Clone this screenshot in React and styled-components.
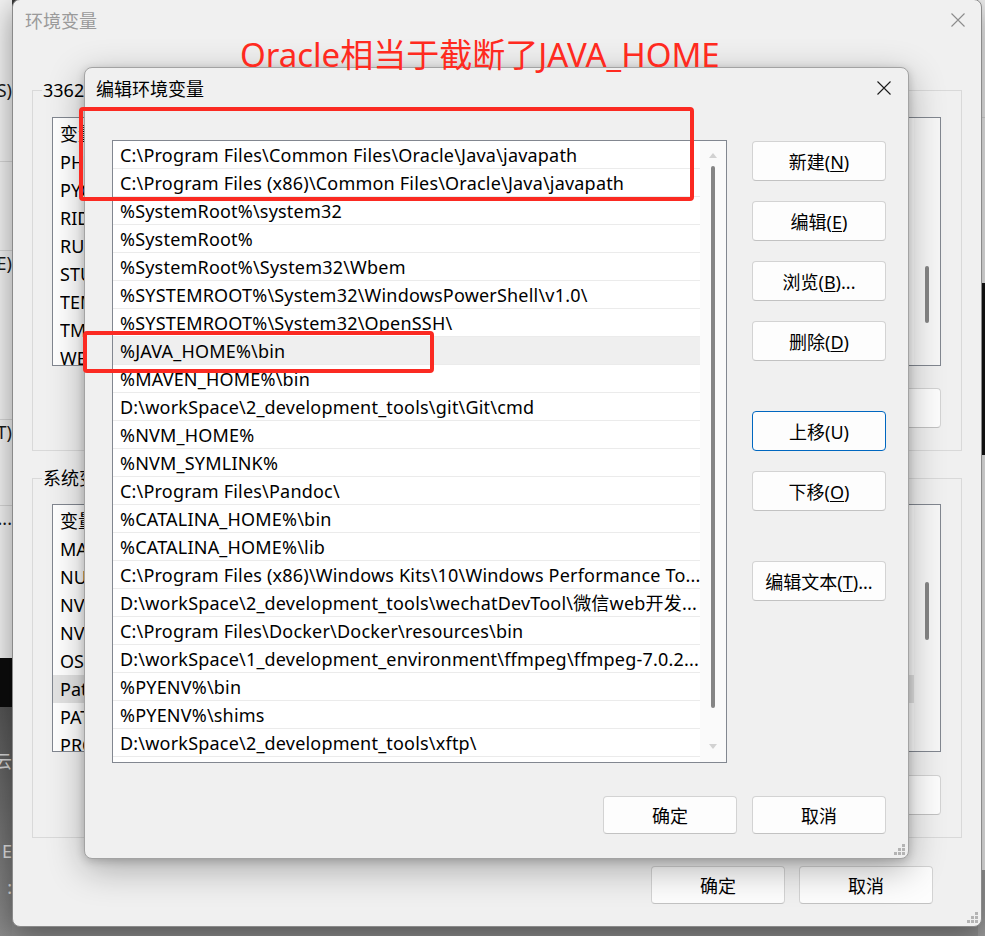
import React from 'react';
import styled, { createGlobalStyle } from 'styled-components';

const GlobalStyle = createGlobalStyle`
  html, body { margin: 0; padding: 0; }
  body {
    font-family: "Noto Sans", "Noto Sans CJK SC", sans-serif;
    color: #000;
  }
  * { box-sizing: border-box; }
`;

const UI_FONT = `"Noto Sans", "Noto Sans CJK SC", sans-serif`;

const Desktop = styled.div`
  position: relative;
  width: 985px;
  height: 936px;
  overflow: hidden;
  background: linear-gradient(#3a3a3a, #4c4c4c 75%, #8c8c8c 95%);
  font-family: ${UI_FONT};
`;

/* windows peeking out at the screen edges */
const BackWindow = styled.div`
  position: absolute;
  top: ${({ $top }) => $top || 0}px;
  left: ${({ $left }) => $left}px;
  width: 260px;
  height: ${({ $h }) => $h}px;
  background: ${({ $bg }) => $bg};
  border-right: ${({ $edge }) => ($edge ? '2px solid #3c3c3c' : 'none')};
  display: flex;
  flex-direction: column;
  font-size: 18px;
  color: #1a1a1a;
  text-align: right;
  overflow: hidden;
`;

const BackRow = styled.div`
  height: ${({ $h }) => $h}px;
  flex-shrink: 0;
  line-height: ${({ $h }) => $h}px;
  background: ${({ $bg }) => $bg || 'transparent'};
  color: ${({ $color }) => $color || 'inherit'};
  border-bottom: ${({ $line }) => ($line ? '1px solid #d6d6d6' : 'none')};
  white-space: nowrap;
`;

/* ---------- outer dialog: 环境变量 ---------- */
const OuterDialog = styled.div`
  position: absolute;
  left: 12px;
  top: -1px;
  width: 970px;
  height: 928px;
  background: #f0f0f0;
  border: 1px solid #8a8a8a;
  border-radius: 8px;
  box-shadow: 0 8px 30px rgba(0, 0, 0, 0.4);
  display: flex;
  flex-direction: column;
`;

const TitleBar = styled.div`
  height: ${({ $h }) => $h}px;
  flex-shrink: 0;
  display: flex;
  align-items: center;
  justify-content: space-between;
  padding: 0 ${({ $pr }) => $pr}px ${({ $pb }) => $pb || 0}px ${({ $pl }) => $pl}px;
  font-size: 18px;
  color: ${({ $inactive }) => ($inactive ? '#9a9a9a' : '#000')};
`;

const OuterBody = styled.div`
  padding: 49px 19px 0 19px;
  display: flex;
  flex-direction: column;
`;

const Group = styled.div`
  border: 1px solid #d9d9d9;
  padding: 0 20px 22px 19px;
  margin-top: ${({ $mt }) => $mt || 0}px;
  display: flex;
  flex-direction: column;
`;

const GroupLabel = styled.div`
  margin: -12px 0 0 -10px;
  align-self: flex-start;
  height: 22px;
  line-height: 22px;
  padding: 0 1px;
  background: #f0f0f0;
  font-size: 18px;
  white-space: nowrap;
`;

const VarList = styled.div`
  margin-top: ${({ $mt }) => $mt}px;
  height: ${({ $h }) => $h}px;
  border: 1px solid #828790;
  background: #fff;
  display: flex;
  overflow: hidden;
`;

const VarRows = styled.div`
  flex: 1;
  display: flex;
  flex-direction: column;
  min-width: 0;
`;

const VarRow = styled.div`
  height: ${({ $header }) => ($header ? 30 : 28)}px;
  flex-shrink: 0;
  display: flex;
  align-items: center;
  padding-left: 7px;
  background: ${({ $selected }) => ($selected ? '#e3e3e3' : 'transparent')};
  font-size: 18px;
  white-space: nowrap;
`;

const VarName = styled.span`
  width: 268px;
  flex-shrink: 0;
  overflow: hidden;
`;

const ScrollTrack = styled.div`
  width: ${({ $w }) => $w}px;
  flex-shrink: 0;
  background: ${({ $bg }) => $bg || '#fafafa'};
  display: flex;
  flex-direction: column;
  align-items: center;
`;

const Thumb = styled.div`
  width: 4px;
  border-radius: 2px;
  background: #858585;
  margin-top: ${({ $top }) => $top}px;
  height: ${({ $h }) => $h}px;
  flex-shrink: 0;
`;

const Arrow = styled.div`
  width: 0;
  height: 0;
  border-left: 4px solid transparent;
  border-right: 4px solid transparent;
  ${({ $down }) =>
    $down ? 'border-top: 5px solid #d2d2d2;' : 'border-bottom: 5px solid #d2d2d2;'}
  margin-top: ${({ $mt }) => $mt}px;
  flex-shrink: 0;
`;

const ButtonRow = styled.div`
  display: flex;
  justify-content: flex-end;
  gap: ${({ $gap }) => $gap}px;
  margin-top: ${({ $mt }) => $mt}px;
  padding-right: ${({ $pr }) => $pr || 0}px;
`;

const Button = styled.button`
  width: 134px;
  height: ${({ $h }) => $h || 40}px;
  flex-shrink: 0;
  margin-top: ${({ $mt }) => $mt || 0}px;
  padding: 0;
  background: #fdfdfd;
  border: 1px solid ${({ $focused }) => ($focused ? '#0067c0' : '#d3d3d3')};
  border-bottom-color: ${({ $focused }) => ($focused ? '#0067c0' : '#c2c2c2')};
  border-radius: 4px;
  font-family: ${UI_FONT};
  font-size: 18px;
  color: #000;
  white-space: nowrap;

  u {
    text-underline-offset: 2px;
  }
`;

/* ---------- front dialog: 编辑环境变量 ---------- */
const EditDialog = styled.div`
  position: absolute;
  left: 84px;
  top: 67px;
  width: 825px;
  height: 792px;
  background: #f0f0f0;
  border: 1px solid #a3a3a3;
  border-radius: 8px;
  box-shadow: 0 10px 36px rgba(0, 0, 0, 0.3), 0 2px 8px rgba(0, 0, 0, 0.18);
  display: flex;
  flex-direction: column;
`;

const EditBody = styled.div`
  padding: 30px 22px 0 27px;
  display: flex;
  flex-direction: column;
`;

const EditMain = styled.div`
  display: flex;
  gap: 25px;
  height: 623px;
`;

const PathList = styled.div`
  width: 615px;
  height: 623px;
  border: 1px solid #828790;
  background: #fff;
  display: flex;
  overflow: hidden;
`;

const PathRows = styled.div`
  flex: 1;
  min-width: 0;
  display: flex;
  flex-direction: column;
`;

const PathRow = styled.div`
  height: 28px;
  flex-shrink: 0;
  padding: 2px 0 0 7px;
  line-height: 25px;
  border-bottom: 1px solid #ebebeb;
  background: ${({ $selected }) => ($selected ? '#efefef' : 'transparent')};
  font-size: 18px;
  letter-spacing: 0.2px;
  white-space: nowrap;
  overflow: hidden;
`;

const ButtonColumn = styled.div`
  width: 134px;
  padding-top: 1px;
  display: flex;
  flex-direction: column;
`;

const Note = styled.div`
  position: absolute;
  left: 240px;
  top: 35px;
  font-size: 33px;
  line-height: 40px;
  color: #ff2a20;
  white-space: nowrap;
`;

const Mark = styled.div`
  position: absolute;
  border: 4px solid #fb2a22;
  border-radius: 4px;
`;

const Grip = styled.svg`
  position: absolute;
  right: 3px;
  bottom: 3px;
`;

const CloseIcon = ({ color }) => (
  <svg width="14" height="14" viewBox="0 0 14 14">
    <path d="M0.5 0.5 L13.5 13.5 M13.5 0.5 L0.5 13.5" stroke={color} strokeWidth="1.1" fill="none" />
  </svg>
);

const ResizeGrip = () => (
  <Grip width="11" height="11" viewBox="0 0 11 11">
    {[[8, 0], [4, 4], [8, 4], [0, 8], [4, 8], [8, 8]].map(([x, y]) => (
      <rect key={`${x}-${y}`} x={x} y={y} width="3" height="3" fill="#b4b4b4" />
    ))}
  </Grip>
);

const paths = [
  'C:\\Program Files\\Common Files\\Oracle\\Java\\javapath',
  'C:\\Program Files (x86)\\Common Files\\Oracle\\Java\\javapath',
  '%SystemRoot%\\system32',
  '%SystemRoot%',
  '%SystemRoot%\\System32\\Wbem',
  '%SYSTEMROOT%\\System32\\WindowsPowerShell\\v1.0\\',
  '%SYSTEMROOT%\\System32\\OpenSSH\\',
  '%JAVA_HOME%\\bin',
  '%MAVEN_HOME%\\bin',
  'D:\\workSpace\\2_development_tools\\git\\Git\\cmd',
  '%NVM_HOME%',
  '%NVM_SYMLINK%',
  'C:\\Program Files\\Pandoc\\',
  '%CATALINA_HOME%\\bin',
  '%CATALINA_HOME%\\lib',
  'C:\\Program Files (x86)\\Windows Kits\\10\\Windows Performance To...',
  'D:\\workSpace\\2_development_tools\\wechatDevTool\\微信web开发...',
  'C:\\Program Files\\Docker\\Docker\\resources\\bin',
  'D:\\workSpace\\1_development_environment\\ffmpeg\\ffmpeg-7.0.2...',
  '%PYENV%\\bin',
  '%PYENV%\\shims',
  'D:\\workSpace\\2_development_tools\\xftp\\',
  '%USERPROFILE%\\AppData\\Local\\Microsoft\\WindowsApps',
];

const userVars = [
  'PHPSTORM_VM_OPTIONS',
  'PYCHARM_VM_OPTIONS',
  'RIDER_VM_OPTIONS',
  'RUBYMINE_VM_OPTIONS',
  'STUDIO_VM_OPTIONS',
  'TEMP',
  'TMP',
  'WEBIDE_VM_OPTIONS',
];

const systemVars = [
  'MAVEN_HOME',
  'NUMBER_OF_PROCESSORS',
  'NVM_HOME',
  'NVM_SYMLINK',
  'OS',
  'Path',
  'PATHEXT',
  'PROCESSOR_ARCHITECTURE',
];

const VariableTable = ({ names, selected, mt, h, thumbTop, thumbH }) => (
  <VarList $mt={mt} $h={h}>
    <VarRows>
      <VarRow $header>
        <VarName>变量</VarName>
        <span>值</span>
      </VarRow>
      {names.map((n) => (
        <VarRow key={n} $selected={n === selected}>
          <VarName>{n}</VarName>
        </VarRow>
      ))}
    </VarRows>
    <ScrollTrack $w={26} $bg="#f7f7f7">
      <Thumb $top={thumbTop} $h={thumbH} />
    </ScrollTrack>
  </VarList>
);

const OuterButtons = ({ mt }) => (
  <ButtonRow $mt={mt} $gap={14}>
    <Button>新建(<u>W</u>)...</Button>
    <Button>编辑(<u>I</u>)...</Button>
    <Button>删除(<u>L</u>)</Button>
  </ButtonRow>
);

export default function App() {
  return (
    <Desktop>
      <GlobalStyle />

      <BackWindow $left={-248} $h={707} $bg="#f2f2f2">
        <BackRow $h={78} />
        <BackRow $h={24}>(S)</BackRow>
        <BackRow $h={60} $line />
        <BackRow $h={89} $line />
        <BackRow $h={24}>(E)</BackRow>
        <BackRow $h={145} $line />
        <BackRow $h={24}>(T)</BackRow>
        <BackRow $h={62} $line />
        <BackRow $h={24}>0...</BackRow>
        <BackRow $h={128} />
        <BackRow $h={49} $bg="#0c0c0c" />
      </BackWindow>
      <BackWindow $left={-248} $top={707} $h={229} $bg="linear-gradient(#555, #8a8a8a)">
        <BackRow $h={40} />
        <BackRow $h={28} $color="#d8d8d8">云</BackRow>
        <BackRow $h={62} />
        <BackRow $h={28} $color="#e0e0e0">E</BackRow>
        <BackRow $h={8} />
        <BackRow $h={28} $color="#e0e0e0">:</BackRow>
      </BackWindow>
      <BackWindow $left={978} $h={936} $bg="#eeeeee">
        <BackRow $h={118} $line />
        <BackRow $h={165} />
        <BackRow $h={172} $bg="#141414" />
        <BackRow $h={415} />
        <BackRow $h={66} $bg="#9a9a9a" />
      </BackWindow>

      <OuterDialog>
        <TitleBar $h={41} $pl={12} $pr={16} $pb={1} $inactive>
          <span>环境变量</span>
          <CloseIcon color="#8c8c8c" />
        </TitleBar>
        <OuterBody>
          <Group>
            <GroupLabel>336263的用户变量(<u>U</u>)</GroupLabel>
            <VariableTable names={userVars} mt={16} h={249} thumbTop={148} thumbH={57} />
            <OuterButtons mt={22} />
          </Group>
          <Group $mt={27}>
            <GroupLabel>系统变量(<u>S</u>)</GroupLabel>
            <VariableTable names={systemVars} selected="Path" mt={15} h={248} thumbTop={77} thumbH={58} />
            <OuterButtons mt={23} />
          </Group>
          <ButtonRow $mt={28} $gap={14} $pr={29}>
            <Button $h={38}>确定</Button>
            <Button $h={38}>取消</Button>
          </ButtonRow>
        </OuterBody>
        <ResizeGrip />
      </OuterDialog>

      <EditDialog>
        <TitleBar $h={42} $pl={11} $pr={17} $pb={3}>
          <span>编辑环境变量</span>
          <CloseIcon color="#1a1a1a" />
        </TitleBar>
        <EditBody>
          <EditMain>
            <PathList>
              <PathRows>
                {paths.map((p, i) => (
                  <PathRow key={p} $selected={i === 7}>
                    {p}
                  </PathRow>
                ))}
              </PathRows>
              <ScrollTrack $w={26}>
                <Arrow $mt={12} />
                <Thumb $top={8} $h={542} />
                <Arrow $down $mt={36} />
              </ScrollTrack>
            </PathList>
            <ButtonColumn>
              <Button>新建(<u>N</u>)</Button>
              <Button $mt={20}>编辑(<u>E</u>)</Button>
              <Button $mt={20}>浏览(<u>B</u>)...</Button>
              <Button $mt={20}>删除(<u>D</u>)</Button>
              <Button $mt={50} $focused>上移(U)</Button>
              <Button $mt={20}>下移(<u>O</u>)</Button>
              <Button $mt={50}>编辑文本(<u>T</u>)...</Button>
            </ButtonColumn>
          </EditMain>
          <ButtonRow $mt={33} $gap={15}>
            <Button $h={38}>确定</Button>
            <Button $h={38}>取消</Button>
          </ButtonRow>
        </EditBody>
        <ResizeGrip />
      </EditDialog>

      <Note>Oracle相当于截断了JAVA_HOME</Note>
      <Mark style={{ left: 79, top: 107, width: 615, height: 94 }} />
      <Mark style={{ left: 83, top: 331, width: 351, height: 42 }} />
    </Desktop>
  );
}
